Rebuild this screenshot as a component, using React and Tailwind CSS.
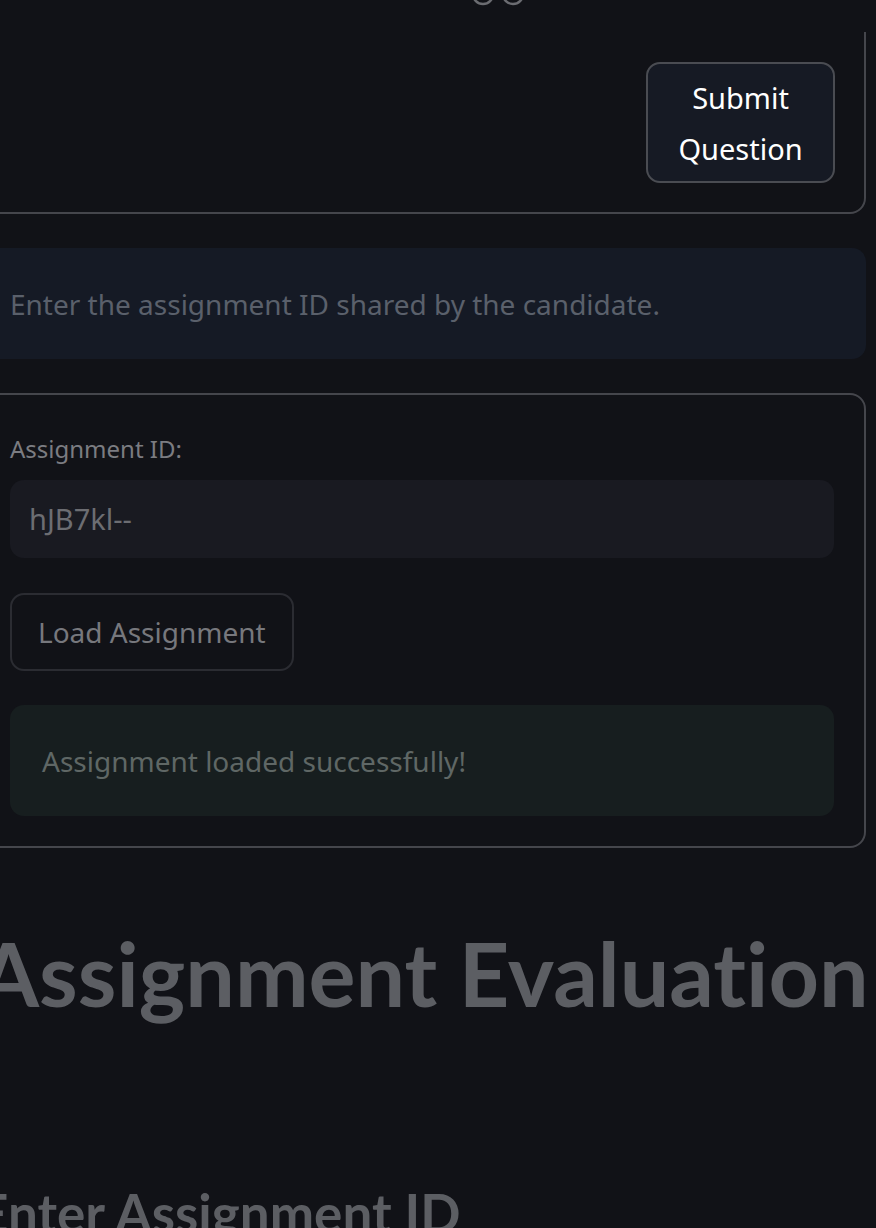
import React from 'react';

const body = { fontFamily: '"Noto Sans", Lato, sans-serif' };
const head = { fontFamily: 'Lato, "Noto Sans", sans-serif' };

function Header() {
  return (
    <div className="absolute left-0 top-0 w-full h-[32px] bg-[#111217]">
      <svg className="absolute left-[468px] top-[-20px]" width="62" height="30" viewBox="0 0 62 30">
        <circle cx="15" cy="14" r="10" fill="none" stroke="#6b6c71" strokeWidth="2.5" />
        <circle cx="45" cy="14" r="10" fill="none" stroke="#6b6c71" strokeWidth="2.5" />
      </svg>
    </div>
  );
}

export default function App() {
  return (
    <div className="relative w-[876px] h-[1228px] overflow-hidden bg-[#111217]" style={body}>
      <div className="ml-[-22px] w-[888px] flex flex-col">
        {/* question form */}
        <div className="mt-[-20px] h-[234px] border-2 border-[#45464c] rounded-[16px] flex justify-end items-start pt-[80px] pr-[29px]">
          <button className="w-[189px] h-[121px] rounded-[14px] border-2 border-[#4a4c52] bg-[#161a24] text-white text-[29px] leading-[51px]">
            Submit<br />Question
          </button>
        </div>

        <div className="mt-[34px] h-[111px] rounded-[14px] bg-[#151a25] flex items-center pl-[32px] text-[28px] text-[#5a606b]">
          Enter the assignment ID shared by the candidate.
        </div>

        {/* load form */}
        <div className="mt-[34px] h-[455px] border-2 border-[#45464c] rounded-[16px] px-[30px] pt-[34px] flex flex-col">
          <div className="text-[24px] leading-[40px] text-[#7b7c81]">Assignment ID:</div>
          <div className="mt-[11px] h-[78px] rounded-[14px] bg-[#191a21] flex items-center pl-[19px] text-[29px] text-[#6c6d72]">
            hJB7kl--
          </div>
          <button className="mt-[35px] self-start h-[78px] px-[26px] rounded-[14px] border-2 border-[#2b2c32] text-[28px] text-[#77787d]">
            Load Assignment
          </button>
          <div className="mt-[34px] h-[111px] rounded-[14px] bg-[#171e1f] flex items-center pl-[32px] text-[28px] text-[#5f6765]">
            Assignment loaded successfully!
          </div>
        </div>

        <h1 className="mt-[65px] text-[88px] leading-[120px] font-bold text-[#5c5e63] whitespace-nowrap [font-variant-ligatures:none]" style={head}>
          Assignment Evaluation
        </h1>

        <h2 className="mt-[140px] text-[53px] leading-[80px] font-bold text-[#5c5e63] whitespace-nowrap [font-variant-ligatures:none]" style={head}>
          Enter Assignment ID
        </h2>
      </div>
      <Header />
    </div>
  );
}
